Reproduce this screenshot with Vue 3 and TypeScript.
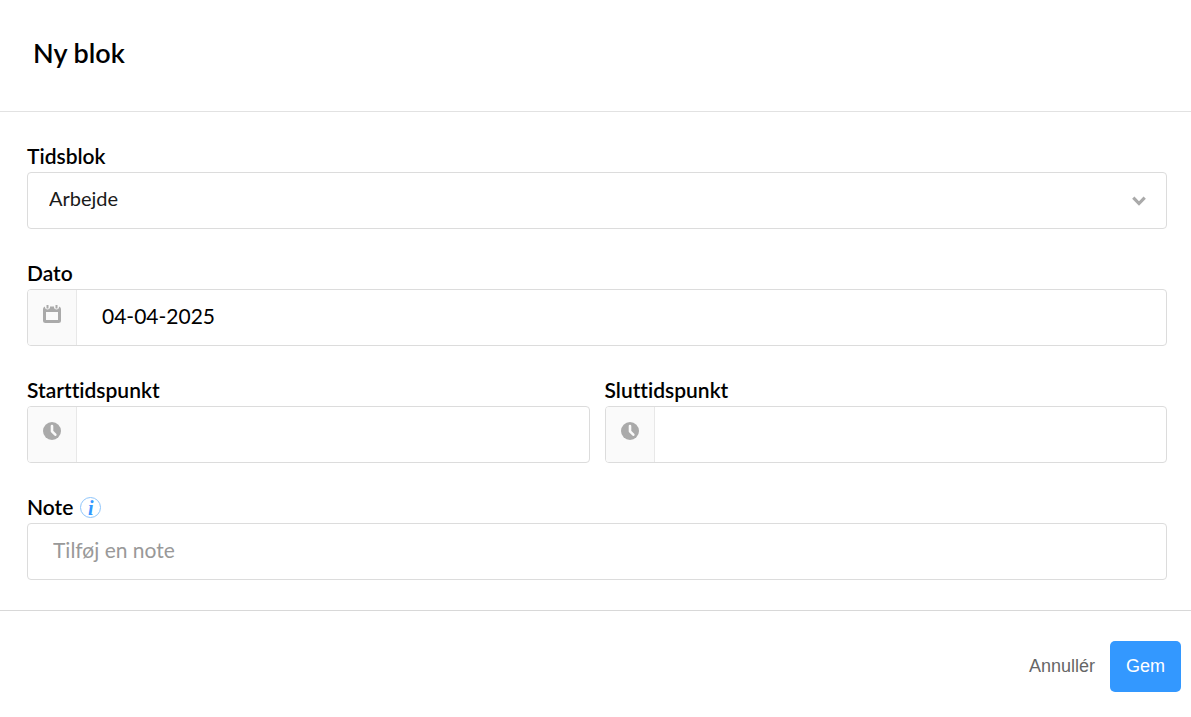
<script setup lang="ts">
import { ref } from 'vue'

const blockTypes: string[] = ['Arbejde']
const blockType = ref<string>('Arbejde')
const date = ref<string>('04-04-2025')
const startTime = ref<string>('')
const endTime = ref<string>('')
const note = ref<string>('')
</script>

<template>
  <form class="dialog" @submit.prevent>
    <header class="head">
      <h1 class="title">Ny blok</h1>
    </header>

    <main class="body">
      <div class="field">
        <label class="label" for="type">Tidsblok</label>
        <div class="control">
          <select id="type" v-model="blockType" class="select">
            <option v-for="t in blockTypes" :key="t">{{ t }}</option>
          </select>
          <svg class="chevron" width="16" height="12" viewBox="0 0 16 12" aria-hidden="true">
            <path d="M2.300 2.600L8 8.500L13.700 2.600" fill="none" stroke="#aaa" stroke-width="3.200" />
          </svg>
        </div>
      </div>

      <div class="field">
        <label class="label" for="date">Dato</label>
        <div class="control">
          <span class="addon">
            <svg width="18" height="18" viewBox="0 0 18 18" aria-hidden="true">
              <path
                fill="#aaa"
                fill-rule="evenodd"
                d="M0 4Q0 2 2 1.500V2.500Q2.300 4.600 4.500 4.600T7 2.500V1.500H11V2.500Q11.300 4.600 13.500 4.600T16 2.500V1.500Q18 2 18 4V15.500Q18 18 15.500 18H2.500Q0 18 0 15.500ZM3 7V15H15V7Z"
              />
              <path d="M4.500 0V3.400M13.500 0V3.400" stroke="#aaa" stroke-width="2" />
            </svg>
          </span>
          <input id="date" v-model="date" class="input" type="text" />
        </div>
      </div>

      <div class="row">
        <div class="field">
          <label class="label" for="start">Starttidspunkt</label>
          <div class="control">
            <span class="addon">
              <svg width="18" height="18" viewBox="0 0 18 18" aria-hidden="true">
                <circle cx="9" cy="9" r="9" fill="#aaa" />
                <path d="M9 4V9.300L12.300 12.700" fill="none" stroke="#fafafa" stroke-width="2.600" stroke-linecap="round" stroke-linejoin="round" />
              </svg>
            </span>
            <input id="start" v-model="startTime" class="input" type="text" />
          </div>
        </div>
        <div class="field">
          <label class="label" for="end">Sluttidspunkt</label>
          <div class="control">
            <span class="addon">
              <svg width="18" height="18" viewBox="0 0 18 18" aria-hidden="true">
                <circle cx="9" cy="9" r="9" fill="#aaa" />
                <path d="M9 4V9.300L12.300 12.700" fill="none" stroke="#fafafa" stroke-width="2.600" stroke-linecap="round" stroke-linejoin="round" />
              </svg>
            </span>
            <input id="end" v-model="endTime" class="input" type="text" />
          </div>
        </div>
      </div>

      <div class="field">
        <div class="label-line">
          <label class="label" for="note">Note</label>
          <span class="info">i</span>
        </div>
        <div class="control">
          <input id="note" v-model="note" class="input" type="text" placeholder="Tilføj en note" />
        </div>
      </div>
    </main>

    <footer class="foot">
      <button class="cancel" type="button">Annullér</button>
      <button class="save" type="submit">Gem</button>
    </footer>
  </form>
</template>

<style>
body {
  background: #fff;
}
</style>

<style scoped>
.dialog,
.dialog * {
  box-sizing: border-box;
}
.dialog {
  font-family: Lato, 'Liberation Sans', sans-serif;
  font-variant-ligatures: none;
  color: #000;
}
.head {
  padding: 36px 33px 41px;
  border-bottom: 1px solid #e2e2e2;
}
.title {
  margin: 0;
  font-size: 27px;
  line-height: 34px;
  font-weight: 600;
}
.body {
  display: flex;
  flex-direction: column;
  gap: 32px;
  padding: 32px 24px 30px 27px;
}
.row {
  display: grid;
  grid-template-columns: 1fr 1fr;
  gap: 15px;
}
.label {
  display: block;
  margin-bottom: 5px;
  font-size: 21px;
  line-height: 23px;
  font-weight: 600;
}
.label-line {
  display: flex;
  gap: 7px;
}
.info {
  display: flex;
  align-items: center;
  justify-content: center;
  width: 21px;
  height: 21px;
  margin-top: 2px;
  border: 1px solid #8ec5fb;
  border-radius: 50%;
  color: #3398ff;
  font: italic bold 20px/20px 'Liberation Serif', serif;
}
.control {
  position: relative;
  display: flex;
  height: 57px;
  border: 1px solid #dcdcdc;
  border-radius: 4px;
  background: #fff;
  overflow: hidden;
}
.addon {
  display: flex;
  flex: none;
  align-items: center;
  justify-content: center;
  width: 49px;
  padding-bottom: 7px;
  border-right: 1px solid #e8e8e8;
  background: #fafafa;
}
.input,
.select {
  flex: 1;
  width: 100%;
  min-width: 0;
  margin: 0;
  border: 0;
  outline: 0;
  background: transparent;
  font-family: inherit;
  font-size: 21px;
  color: #000;
}
.input {
  padding: 0 25px 5px;
}
.input::placeholder {
  color: #999;
  opacity: 1;
}
.select {
  padding: 0 48px 5px 21px;
  appearance: none;
  font-size: 20px;
  color: #1a1a1a;
}
.chevron {
  position: absolute;
  right: 19px;
  top: 22px;
  pointer-events: none;
}
.foot {
  display: flex;
  justify-content: flex-end;
  align-items: center;
  padding: 30px 10px 24px;
  border-top: 1px solid #d8d8d8;
}
.cancel,
.save {
  height: 51px;
  margin: 0;
  border: 0;
  border-radius: 5px;
  font-family: 'Liberation Sans', Arial, sans-serif;
  font-size: 18px;
  line-height: 24px;
}
.cancel {
  padding: 0 15px 2px;
  background: transparent;
  color: #666;
}
.save {
  padding: 0 16px 2px;
  background: #3398ff;
  color: #fff;
}
</style>
